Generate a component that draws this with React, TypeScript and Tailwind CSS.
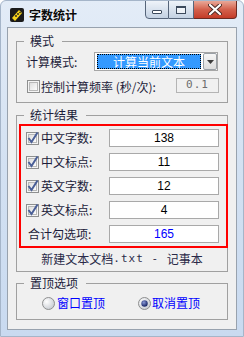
import React from "react";

const FONT = { fontFamily: '"Noto Sans CJK SC", "Liberation Sans", sans-serif' };

function CheckBox({ checked }: { checked?: boolean }) {
  return (
    <svg width="13" height="13" viewBox="0 0 13 13" className="shrink-0 overflow-visible">
      <defs>
        <linearGradient id="cbg" x1="0" y1="0" x2="1" y2="1">
          <stop offset="0" stopColor="#dcdcdc" />
          <stop offset="1" stopColor="#ffffff" />
        </linearGradient>
      </defs>
      <rect x="0.5" y="0.5" width="12" height="12" fill="#f4f4f4" stroke="#8e8f8f" />
      <rect x="2.5" y="2.5" width="8" height="8" fill="url(#cbg)" stroke="#b8b8b8" />
      {checked && (
        <path d="M2.5 6 L5.5 10 L11.5 0.5" fill="none" stroke="#4a5f97" strokeWidth="2" />
      )}
    </svg>
  );
}

function Radio({ checked }: { checked?: boolean }) {
  return (
    <svg width="13" height="13" viewBox="0 0 13 13" className="shrink-0">
      <defs>
        <radialGradient id="rg" cx="0.35" cy="0.35" r="0.7">
          <stop offset="0" stopColor="#ffffff" />
          <stop offset="1" stopColor="#c8ccd2" />
        </radialGradient>
        <radialGradient id="rd" cx="0.4" cy="0.35" r="0.6">
          <stop offset="0" stopColor="#8a9ad8" />
          <stop offset="1" stopColor="#1d2a6b" />
        </radialGradient>
      </defs>
      <circle cx="6.5" cy="6.5" r="6" fill="url(#rg)" stroke="#8e8f8f" />
      {checked && <circle cx="6.5" cy="6.5" r="3.2" fill="url(#rd)" />}
    </svg>
  );
}

function Group({ title, className, children }: { title: string; className: string; children: React.ReactNode }) {
  return (
    <div className={`relative mx-[8px] border border-[#a0a0a0] ${className}`}>
      <span className="absolute left-[7px] top-[-9px] bg-[#f0f0f0] pl-[6px] pr-[8px] text-[12px] leading-[16px] text-[#1c1c3a]">
        {title}
      </span>
      {children}
    </div>
  );
}

const ROWS = [
  { label: "中文字数:", value: "138", check: true },
  { label: "中文标点:", value: "11", check: true },
  { label: "英文字数:", value: "12", check: true },
  { label: "英文标点:", value: "4", check: true },
  { label: "合计勾选项:", value: "165", check: false },
];

export default function App() {
  return (
    <div style={FONT} className="w-[244px] h-[337px] overflow-hidden rounded-t-[6px] border border-[#a5b5c9] bg-gradient-to-b from-[#e3ecf7] via-[#d3e1f2] to-[#c9daf0]">
      {/* title bar */}
      <div className="relative flex h-[26px] items-center">
        <svg width="14" height="14" viewBox="0 0 14 14" className="ml-[9px] mt-[2px]">
          <rect x="0" y="0" width="14" height="14" rx="2" fill="#1a1a1a" />
          <path d="M2 10 L9 2 L12 5 L5 13 Z" fill="#f4d21c" />
          <circle cx="6" cy="8" r="0.9" fill="#1a1a1a" />
          <circle cx="8" cy="6" r="0.9" fill="#1a1a1a" />
          <circle cx="10" cy="4.5" r="0.8" fill="#1a1a1a" />
        </svg>
        <span className="ml-[5px] mt-[1px] text-[12px] font-bold text-[#0a0a0a] [text-shadow:0_0_3px_#ffffff]">
          字数统计
        </span>
        <div className="absolute right-[6px] top-[-1px] flex h-[19px]">
          <div className="flex w-[24px] items-center justify-center rounded-bl-[4px] border border-[#56657a] bg-gradient-to-b from-[#eef3f9] to-[#c4d2e3]">
            <div className="mt-[4px] h-[4px] w-[10px] rounded-[1px] border border-[#3c4a5c] bg-white" />
          </div>
          <div className="flex w-[25px] items-center justify-center border-y border-r border-[#56657a] bg-gradient-to-b from-[#eef3f9] to-[#c4d2e3]">
            <div className="h-[8px] w-[10px] border border-[#3c4a5c] border-t-2 bg-white/60" />
          </div>
          <div className="flex w-[43px] items-center justify-center rounded-br-[4px] border-y border-r border-[#6b2a22] bg-gradient-to-b from-[#e8a898] via-[#d3604c] to-[#c43b28]">
            <svg width="14" height="11" viewBox="0 0 14 11">
              <path d="M2 1 L12 10 M12 1 L2 10" stroke="#4a2a26" strokeWidth="4" strokeLinecap="round" />
              <path d="M2 1 L12 10 M12 1 L2 10" stroke="#ffffff" strokeWidth="2.2" strokeLinecap="round" />
            </svg>
          </div>
        </div>
      </div>

      {/* client area */}
      <div className="mx-[6px] flex h-[303px] flex-col border border-[#98a2ae] bg-[#f0f0f0] text-[12px] text-[#1c1c3a]">
        <Group title="模式" className="mt-[13px] h-[62px] pt-[10px]">
          <div className="flex h-[19px] items-center">
            <span className="ml-[9px] w-[68px]">计算模式:</span>
            <div className="flex h-[19px] w-[124px] items-center border border-[#a6a6a6] bg-white pl-[2px]">
              <div className="flex h-[15px] w-[105px] items-center justify-center border border-dotted border-black bg-[#3399ff] text-white">
                计算当前文本
              </div>
              <div className="ml-[2px] flex h-[17px] w-[14px] items-center justify-center rounded-[2px] border border-[#9aa0a6] bg-gradient-to-b from-[#f6f6f6] to-[#dcdcdc]">
                <svg width="7" height="4" viewBox="0 0 7 4">
                  <path d="M0 0 H7 L3.5 4 Z" fill="#3c3c3c" />
                </svg>
              </div>
            </div>
          </div>
          <div className="mt-[7px] flex h-[17px] items-center">
            <span className="ml-[10px]"><CheckBox /></span>
            <span className="ml-[1px] w-[135px] whitespace-nowrap">控制计算频率 (秒/次):</span>
            <div className="-mt-[2px] flex h-[15px] w-[43px] items-center justify-center border border-[#b4b4b4] bg-[#f0f0f0] text-[11px] tracking-[1px] text-[#6d6d6d]" style={{ fontFamily: '"DejaVu Sans Mono", monospace' }}>
              0.1
            </div>
          </div>
        </Group>

        <Group title="统计结果" className="mt-[12px] h-[157px] pt-[8px]">
          <div className="ml-[2px] mr-[-1px] h-[124px] border-2 border-[#ff0000] pt-[3px]">
            {ROWS.map((r, i) => (
              <div key={r.label} className={`flex h-[18px] items-center ${i ? "mt-[6px]" : ""}`}>
                {r.check ? (
                  <>
                    <span className="ml-[5px]"><CheckBox checked /></span>
                    <span className="ml-[2px] w-[68px]">{r.label}</span>
                  </>
                ) : (
                  <span className="ml-[7px] w-[81px]">{r.label}</span>
                )}
                <div
                  className={`flex h-[18px] w-[110px] items-center justify-center border border-[#a9a9a9] bg-white ${r.check ? "text-black" : "text-[#0000ff]"}`}
                  style={{ fontFamily: '"Liberation Sans", sans-serif' }}
                >
                  {r.value}
                </div>
              </div>
            ))}
          </div>
          <div className="mt-[3px] flex h-[16px] items-center justify-center whitespace-pre text-[#2a2a48]">
            新建文本文档<span className="tracking-[1px]" style={{ fontFamily: '"DejaVu Sans Mono", monospace', fontSize: "11px" }}>.txt - </span>记事本
          </div>
        </Group>

        <Group title="置顶选项" className="mt-[11px] h-[37px] pt-[11px]">
          <div className="flex h-[16px] items-center text-[#0000ff]">
            <span className="ml-[25px]"><Radio /></span>
            <span className="ml-[2px] w-[81px]">窗口置顶</span>
            <Radio checked />
            <span className="ml-[1px]">取消置顶</span>
          </div>
        </Group>
      </div>
    </div>
  );
}
